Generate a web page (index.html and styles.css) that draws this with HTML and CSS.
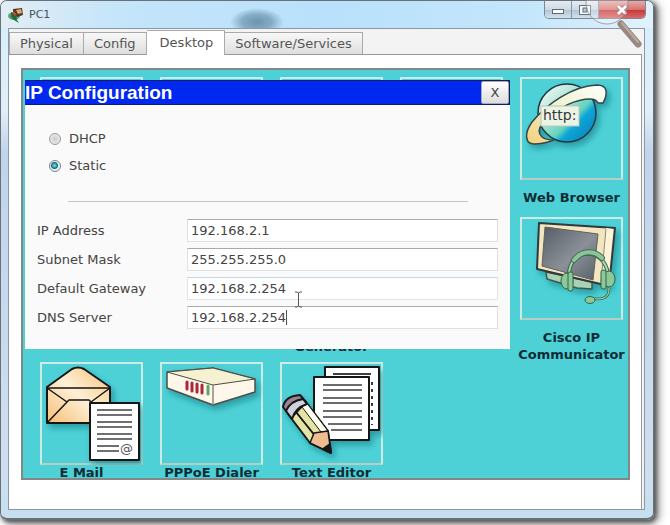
FILE: index.html
```html
<!DOCTYPE html>
<html lang="en">
<head>
<meta charset="utf-8">
<title>PC1</title>
<link rel="stylesheet" href="styles.css">
</head>
<body>
<main class="window">
  <header class="titlebar">
    <svg class="app-icon" viewBox="0 0 16 16" aria-hidden="true">
      <ellipse cx="6" cy="9" rx="6" ry="4" fill="#6d9a7c"/>
      <path d="M5 2 14 1l1 7-6 2-4-3z" fill="#4b3926"/>
      <path d="m8 3 5-1 1 4-4 1z" fill="#e6a66e"/>
      <path d="m3 5 5 3 1 5 2 3-5-3-3-3z" fill="#197239"/>
      <path d="m5 5 3 3" stroke="#df4537" stroke-width="2"/>
    </svg>
    <h1 class="window-title">PC1</h1>
    <div class="window-buttons">
      <button class="win-btn" aria-label="Minimize"><svg viewBox="0 0 16 16"><rect x="2.5" y="7.5" width="11" height="4" fill="#fff" stroke="#606973"/></svg></button>
      <button class="win-btn" aria-label="Maximize"><svg viewBox="0 0 16 16"><rect x="2.5" y="3.5" width="11" height="9" fill="#f6f9fb" stroke="#68727d"/><rect x="6" y="6" width="4" height="4" fill="#b8c5d2" stroke="#68727d"/></svg></button>
      <button class="win-btn close" aria-label="Close"><svg viewBox="0 0 16 16"><path d="m4 4 8 8m0-8-8 8" stroke="#8e4a4a" stroke-width="4.5"/><path d="m4 4 8 8m0-8-8 8" stroke="#fff" stroke-width="2.8"/></svg></button>
    </div>
    <svg class="lens" viewBox="0 0 60 50" aria-hidden="true">
      <circle cx="23" cy="3" r="21" fill="#fff" fill-opacity=".25" stroke="#8b8386" stroke-opacity=".7"/>
      <path d="m37 24 17 20" stroke="#988782" stroke-width="7" stroke-linecap="round"/>
      <path d="m38 23 16 19" stroke="#b9aaa4" stroke-width="2" stroke-linecap="round"/>
    </svg>
  </header>

  <div class="client">
    <nav class="tabs">
      <button class="tab">Physical</button>
      <button class="tab">Config</button>
      <button class="tab active">Desktop</button>
      <button class="tab">Software/Services</button>
    </nav>
    <section class="pane">
      <div class="board">
        <div class="apps">
          <div class="app"><div class="tile"></div></div>
          <div class="app"><div class="tile"></div></div>
          <div class="app"><div class="tile"></div></div>
          <div class="app"><div class="tile"></div></div>
          <div class="app">
            <div class="tile">
              <svg viewBox="0 0 103 103" aria-hidden="true">
                <defs>
                  <linearGradient id="globe" x1="0" y1="0" x2="1" y2="1"><stop offset="0" stop-color="#fff"/><stop offset=".35" stop-color="#b5e6d7"/><stop offset=".6" stop-color="#65d2bd"/><stop offset=".68" stop-color="#0aa5d8"/><stop offset="1" stop-color="#0879b0"/></linearGradient>
                  <linearGradient id="ring" x1="1" y1="0" x2="0" y2="1"><stop offset="0" stop-color="#fff"/><stop offset=".5" stop-color="#eef2cc"/><stop offset="1" stop-color="#f5cf79"/></linearGradient>
                  <filter id="soft" x="-20%" y="-20%" width="150%" height="150%"><feDropShadow dx="3" dy="4" stdDeviation="3" flood-color="#17777f" flood-opacity=".6"/></filter>
                </defs>
                <g filter="url(#soft)">
                  <circle cx="47" cy="36" r="29" fill="url(#globe)" stroke="#20373f" stroke-width="1.5"/>
                  <path d="M83 26C88 17 88 8 77 8 52 9 27 27 12 45 4 56 5 67 14 67q10 0 20-4-8 0-12-3-6-6 1-14C38 29 58 22 70 22q6 0 8 4z" fill="url(#ring)" stroke="#33464a" stroke-width="1.5"/>
                </g>
                <rect x="21" y="29" width="38" height="20" fill="#edf3e4" stroke="#bac9bd"/>
                <text x="23" y="43" class="icon-text">http:</text>
              </svg>
            </div>
            <span class="name">Web Browser</span>
          </div>

          <div class="app hidden-label third"><div class="tile"></div><span class="name">Generator</span></div>
          <div class="app fifth">
            <div class="tile">
              <svg viewBox="0 0 103 103" aria-hidden="true">
                <defs>
                  <linearGradient id="screen" x1="0" y1="0" x2="1" y2="1"><stop offset="0" stop-color="#555d66"/><stop offset=".55" stop-color="#8b9098"/><stop offset="1" stop-color="#555f68"/></linearGradient>
                </defs>
                <g filter="url(#soft)" stroke-linejoin="round">
                  <path d="m26 55 1 7 30 9 15 1v-7z" fill="#abd1b4" stroke="#385a52" stroke-width="1.5"/>
                  <path d="m19 6 76 5-6 58-72-17z" fill="#f1e6bf" stroke="#30383a" stroke-width="2"/>
                  <path d="m86 11 7 1-5 55-7-2z" fill="#fff3d9"/>
                  <path d="m25 10 53 7-5 46-51-14z" fill="url(#screen)" stroke="#62615a"/>
                </g>
                <path d="m86 12-5 53" fill="none" stroke="#8f8870"/>
                <path d="M49 57C50 31 84 29 88 57" fill="none" stroke="#3d6751" stroke-width="4"/>
                <path d="M49 57C50 31 84 29 88 57" fill="none" stroke="#a5dab0" stroke-width="2"/>
                <path d="M54 43c8-10 20-10 28-2" fill="none" stroke="#426b51" stroke-width="6" stroke-linecap="round"/>
                <path d="M54 43c8-10 20-10 28-2" fill="none" stroke="#8bc59a" stroke-width="4" stroke-linecap="round"/>
                <path d="M89 71c0 10-5 11-15 11" fill="none" stroke="#477959" stroke-width="3"/>
                <path d="M89 71c0 10-5 11-15 11" fill="none" stroke="#a5dab0"/>
                <g fill="#8bc998" stroke="#356347">
                  <ellipse cx="47" cy="64" rx="6" ry="8"/><rect x="48" y="55" width="5" height="19" rx="2"/>
                  <ellipse cx="89" cy="62" rx="6" ry="8"/><rect x="81" y="53" width="5" height="19" rx="2"/>
                  <ellipse cx="70" cy="83" rx="5" ry="3.5"/>
                </g>
              </svg>
            </div>
            <span class="name">Cisco IP Communicator</span>
          </div>

          <div class="app tight mail first">
            <div class="tile">
              <svg viewBox="0 0 103 103" aria-hidden="true">
                <defs><linearGradient id="paper" x1="0" y1="1" x2="1" y2="0"><stop stop-color="#f5bd75"/><stop offset=".5" stop-color="#fff0d5"/><stop offset="1" stop-color="#f5c178"/></linearGradient></defs>
                <g filter="url(#soft)" stroke="#151515" stroke-width="2" stroke-linejoin="round">
                  <path d="M7 25 32 7q6-3 12 0l26 18v36H7z" fill="url(#paper)"/>
                  <path d="M7 26h63M7 26l20 14 2-2h20l2 2 19-14M27 40 7 61" fill="none" stroke-width="1.5"/>
                  <path d="M50 41h49v57H50z" fill="#fff"/>
                </g>
                <path d="M57 48h35M57 53h35M57 60h35M57 65h35M57 72h35M57 77h35M57 84h22M57 89h22" stroke="#707070" stroke-width="2"/>
                <text x="80" y="91" class="at-text">@</text>
              </svg>
            </div>
            <span class="name">E Mail</span>
          </div>
          <div class="app tight">
            <div class="tile">
              <svg viewBox="0 0 103 103" aria-hidden="true">
                <g filter="url(#soft)" stroke="#4b4e48" stroke-width="1.5" stroke-linejoin="round">
                  <path d="m7 10 46-4 42 11v13L53 43 7 26z" fill="#fff7e9"/>
                  <path d="m7 10 46-4 42 11-42 6z" fill="#f6f1d1" stroke-width="1"/>
                  <path d="M53 23v20" stroke="#8b897e"/>
                </g>
                <path d="M27 20v7m5-6v8m5-7v8m5-7v8" stroke="#a9273d" stroke-width="3" stroke-linecap="round"/>
                <path d="M48 24v8" stroke="#60a56b" stroke-width="3" stroke-linecap="round"/>
              </svg>
            </div>
            <span class="name">PPPoE Dialer</span>
          </div>
          <div class="app tight">
            <div class="tile">
              <svg viewBox="0 0 103 103" aria-hidden="true">
                <g filter="url(#soft)" stroke="#171717" stroke-width="2" stroke-linejoin="round">
                  <path d="M45 5h54v63H45z" fill="#fff"/>
                  <path d="M34 15h55v63H34z" fill="#fff"/>
                  <path d="m26 40 22 29 3 22-21-10-19-25z" fill="#e4e5a4"/>
                  <path d="m26 40 22 29-7 1-22-29z" fill="#fffff0" stroke-width="1"/>
                  <path d="m16 50 20 25" fill="none"/>
                  <path d="m48 69 3 22-21-10 4-10z" fill="#f0bd91" stroke-width="1.5"/>
                  <path d="m43 87 8 4-1-9z" fill="#171717"/>
                  <path d="M3 45q2-11 17-12l6 7q-11 5-15 16z" fill="#9b8295"/>
                  <path d="M6 49q4-10 17-12l4 5Q15 46 12 57z" fill="#ced0da"/>
                </g>
                <path d="M53 12h38" stroke="#3f3f3f" stroke-width="2"/>
                <path d="M92 20v43" stroke="#393939" stroke-width="2" stroke-dasharray="3 4"/>
                <path d="M43 23h39M43 28h39M43 36h39M43 41h39M43 49h39M43 55h39M48 62h34M51 68h31" stroke="#6c6c6c" stroke-width="2"/>
              </svg>
            </div>
            <span class="name">Text Editor</span>
          </div>
        </div>

        <form class="dialog">
          <div class="dialog-head">
            <h2 class="dialog-title">IP Configuration</h2>
            <button type="button" class="dialog-close">X</button>
          </div>
          <div class="modes">
            <label class="mode"><input type="radio" name="mode">DHCP</label>
            <label class="mode"><input type="radio" name="mode" checked>Static</label>
          </div>
          <hr class="rule">
          <div class="fields">
            <label for="ip">IP Address</label>
            <div class="field"><input id="ip" type="text" value="192.168.2.1"></div>
            <label for="mask">Subnet Mask</label>
            <div class="field"><input id="mask" type="text" value="255.255.255.0"></div>
            <label for="gateway">Default Gateway</label>
            <div class="field hover"><input id="gateway" type="text" value="192.168.2.254">
              <svg class="pointer" viewBox="0 0 9 17" aria-hidden="true"><path d="M1 1h2l1.500 1L6 1h2M4.500 2v13M1 16h2l1.500-1L6 16h2" fill="none" stroke="#555"/></svg>
            </div>
            <label for="dns">DNS Server</label>
            <div class="field editing"><input id="dns" type="text" value="192.168.2.254"></div>
          </div>
        </form>
      </div>
    </section>
  </div>
</main>
</body>
</html>
```
FILE: styles.css
```css
* {
  box-sizing: border-box;
}

body {
  display: flex;
  min-height: 100vh;
  margin: 0;
  padding: 0 16px 5px 0;
  background: #fff;
  color: #444;
  font: 13px/17px "DejaVu Sans", Verdana, sans-serif;
}

button,
input {
  font: inherit;
  color: inherit;
}

.window {
  display: flex;
  flex: 1;
  flex-direction: column;
  min-width: 0;
  padding: 0 8px 8px 7px;
  border: 1px solid #67717b;
  border-width: 1px 1px 2px 1px;
  border-radius: 7px;
  background: linear-gradient(#d5edfb, #e2eff9 110px, #c2d4ea 150px, #cfdff0 470px, #c5dfee);
  box-shadow: 2px 2px 4px #555, 4px 3px 10px #777;
}

/* Title bar */

.titlebar {
  position: relative;
  display: flex;
  align-items: flex-start;
  height: 27px;
  margin: 0 -8px 0 -7px;
  padding: 0 7px;
  border-radius: 6px 6px 0 0;
  background:
    radial-gradient(ellipse 27px 14px at 256px 21px, #6d94ae, #84adc5 55%, transparent),
    linear-gradient(90deg, #e2edf4, #c4e5fa 18%, #b9e1fb 50%, #c3e6fb 80%, #e2f2fc);
}

.app-icon {
  width: 16px;
  height: 16px;
  margin-top: 6px;
}

.window-title {
  flex: 1;
  margin: 5px 0 0 5px;
  color: #46535b;
  font-size: 11px;
  font-weight: normal;
}

.window-buttons {
  display: flex;
  border: 1px solid #7b8792;
  border-top: 0;
  border-radius: 0 0 5px 5px;
  overflow: hidden;
}

.win-btn {
  display: flex;
  align-items: center;
  justify-content: center;
  width: 27px;
  height: 17px;
  padding: 0;
  border: 0;
  border-right: 1px solid #8b98a4;
  background: linear-gradient(#e6edf3, #ccd9e4 50%, #afc3d4 51%, #d1e2ee);
}

.win-btn svg {
  width: 16px;
  height: 16px;
}

.win-btn.close {
  width: 46px;
  border-right: 0;
  background: linear-gradient(#e9aaa7, #d6736f 50%, #c43839 51%, #da6765);
}

.lens {
  position: absolute;
  z-index: 2;
  top: -1px;
  right: 9px;
  width: 60px;
  height: 50px;
}

/* Client area */

.client {
  display: flex;
  flex: 1;
  flex-direction: column;
  padding-right: 2px;
  border: 1px solid #8b98a3;
  background: #f3f3f3;
}

.tabs {
  display: flex;
  align-items: flex-end;
  height: 25px;
}

.tab {
  height: 22px;
  padding: 0 10px;
  border: 1px solid #aaa;
  border-width: 1px 1px 0 1px;
  background: linear-gradient(#f7f7f7, #ececec 50%, #dedede);
  color: #555;
  white-space: nowrap;
}

.tab + .tab {
  border-left: 0;
}

.tab.active {
  position: relative;
  height: 25px;
  padding: 0 11px 1px 13px;
  margin-bottom: -1px;
  background: #fff;
}

.pane {
  display: flex;
  flex: 1;
  padding: 13px 11px 29px 12px;
  border: 1px solid #999;
  border-width: 1px 1px 0 0;
  background: #fff;
}

.board {
  position: relative;
  flex: 1;
  min-width: 0;
  padding: 7px 5px 0 17px;
  border: 2px solid #828787;
  background: #4dd1d7;
}

/* Application tiles */

.apps {
  display: grid;
  grid-template-columns: repeat(5, minmax(0, 1fr));
  grid-template-rows: 140px 145px auto;
  column-gap: 17px;
}

.app {
  display: flex;
  flex-direction: column;
  align-items: center;
}

.first {
  grid-column: 1;
}

.third {
  grid-column: 3;
}

.fifth {
  grid-column: 5;
}

.tile {
  align-self: stretch;
  aspect-ratio: 1;
  border: 2px solid #cdebe3;
  border-bottom-color: #b9cdc4;
}

.tile svg {
  display: block;
  width: calc(100% + 4px);
  margin: -2px;
}

.name {
  margin: 9px -8px 0;
  color: #0d2c35;
  font-weight: bold;
  text-align: center;
}

.tight .name {
  margin-top: -1px;
  margin-bottom: -4px;
}

.mail .name {
  padding-right: 20px;
}

.hidden-label .name {
  margin-top: 18px;
}

.icon-text {
  fill: #303b3d;
  font-size: 14px;
}

.at-text {
  fill: #555;
  font-size: 13px;
}

/* IP configuration dialog */

.dialog {
  position: absolute;
  top: 10px;
  left: 2px;
  right: 118px;
  padding-bottom: 20px;
  background: #fafafa;
}

.dialog-head {
  display: flex;
  align-items: center;
  justify-content: space-between;
  height: 25px;
  border: 1px solid #101b6f;
  border-width: 1px 1px 1px 0;
  background: #0028ef;
}

.dialog-title {
  margin: 0;
  color: #fff;
  font: bold 19px/22px "Liberation Sans", Arial, sans-serif;
}

.dialog-close {
  width: 28px;
  height: 23px;
  padding: 0;
  border: 1px solid #aaa;
  border-radius: 2px;
  background: linear-gradient(#fff, #eee 50%, #ddd);
}

.modes {
  display: grid;
  gap: 10px;
  padding: 25px 24px 0;
}

.mode {
  display: flex;
  align-items: center;
  gap: 8px;
}

.mode input {
  appearance: none;
  width: 12px;
  height: 12px;
  margin: 0;
  border: 1px solid #999;
  border-radius: 50%;
  background: radial-gradient(#ccc, #f5f5f5);
}

.mode input:checked {
  border-color: #71858e;
  background: radial-gradient(circle at 45% 45%, #64c5ca 0 1px, #176879 3px, #e4f1f5 4px);
}

.rule {
  margin: 27px 42px 17px 43px;
  border: 0;
  border-top: 1px solid #c4c4c4;
}

.fields {
  display: grid;
  grid-template-columns: 150px 1fr;
  align-items: center;
  row-gap: 6px;
  padding: 0 12px;
}

.field {
  position: relative;
}

.field input {
  display: block;
  width: 100%;
  height: 23px;
  padding: 0 3px;
  border: 1px solid #e0e0e0;
  border-top-color: #aaa;
  outline: 0;
  background: #fff;
}

.field.hover input {
  border-color: #bfd8e7 #dce7ed #dce7ed;
}

.editing::after {
  content: "";
  position: absolute;
  top: 4px;
  left: 99px;
  height: 15px;
  border-left: 1px solid #555;
}

.pointer {
  position: absolute;
  z-index: 1;
  top: 14px;
  left: 107px;
  width: 9px;
  height: 17px;
}
```
